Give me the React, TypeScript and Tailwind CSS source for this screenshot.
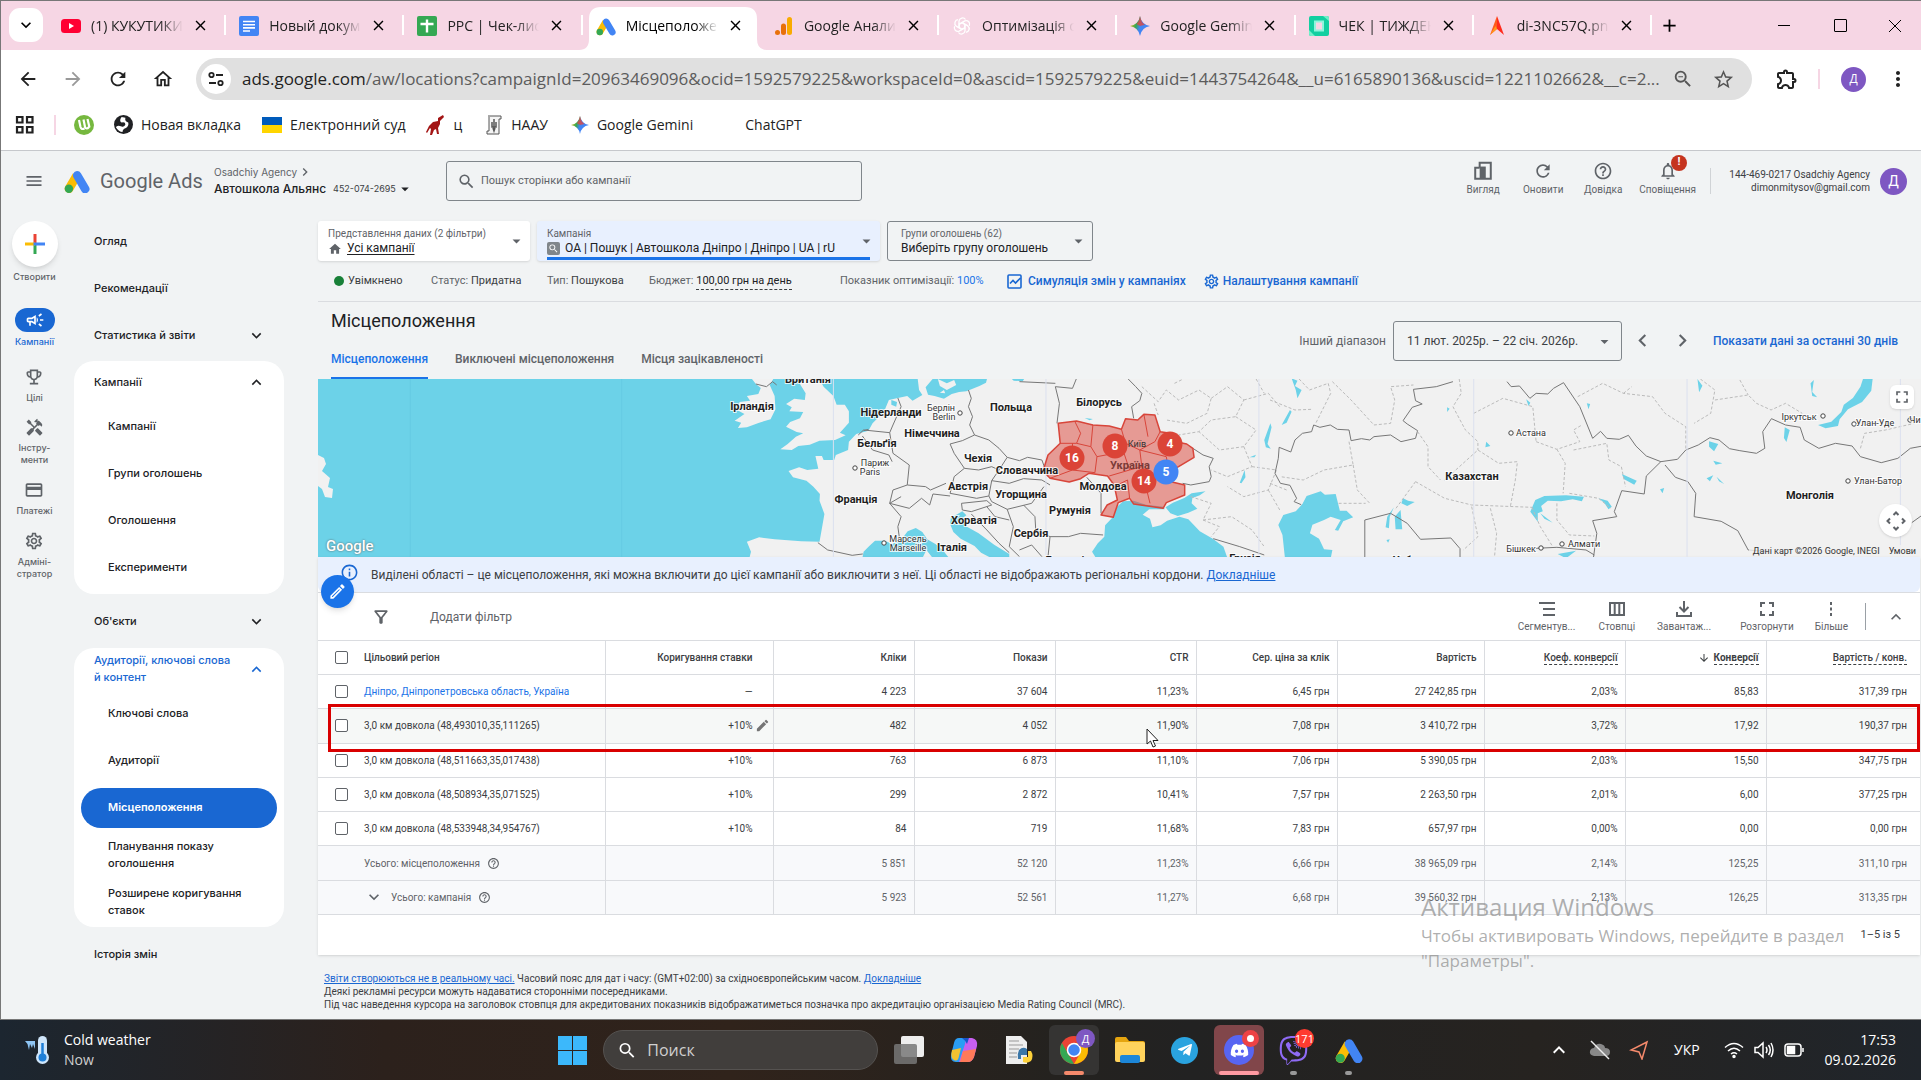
import React from 'react';
import {
  MdAdd, MdArrowBack, MdArrowDownward, MdArrowDropDown, MdArrowForward, MdChevronLeft, MdChevronRight,
  MdClose, MdEdit, MdFullscreen, MdHandyman, MdHelpOutline, MdHome, MdKeyboardArrowDown, MdKeyboardArrowUp,
  MdMenu, MdMoreVert, MdOutlineCampaign, MdOutlineCreditCard, MdOutlineEmojiEvents, MdOutlineExtension,
  MdOutlineFilterAlt, MdOutlineHome, MdOutlineInfo, MdOutlineModeEdit, MdOutlineNotifications,
  MdOutlineSettings, MdRefresh, MdSearch, MdStarBorder, MdZoomOut,
} from 'react-icons/md';
import { FaDiscord, FaTelegramPlane, FaViber } from 'react-icons/fa';

/* ---------- Logos ---------- */

const AdsLogo: React.FC<{ className?: string }> = ({ className }) => (
  <svg viewBox="0 0 26 24" className={className} aria-hidden="true">
    <path d="M9 4.2 L1.2 17.6 A4.4 4.4 0 0 0 8.8 22 L14.6 12 Z" fill="#fbbc04" />
    <path d="M9.3 4.6 A4.3 4.3 0 0 1 16.9 4.2 L25 18 A4.3 4.3 0 0 1 17.5 22.2 L9.5 8.6 Q8.5 6.6 9.3 4.6Z" fill="#4285f4" />
    <circle cx="4.9" cy="19.7" r="4.2" fill="#34a853" />
  </svg>
);

const GeminiLogo: React.FC<{ className?: string }> = ({ className }) => (
  <svg viewBox="0 0 20 20" className={className} aria-hidden="true">
    <defs>
      <linearGradient id="gem" x1="0" y1="0.2" x2="1" y2="0.5">
        <stop offset="0" stopColor="#fbbc04" />
        <stop offset="0.35" stopColor="#34a853" />
        <stop offset="0.55" stopColor="#4285f4" />
        <stop offset="1" stopColor="#4285f4" />
      </linearGradient>
    </defs>
    <path d="M10 0 Q11.5 8.5 20 10 Q11.5 11.500 10 20 Q8.500 11.500 0 10 Q8.500 8.500 10 0Z" fill="url(#gem)" />
    <path d="M10 0 Q11.300 7 15 8.800 L10 10 L6.500 8 Q9.200 5.500 10 0Z" fill="#ea4335" opacity="0.75" />
  </svg>
);

const YoutubeLogo = () => (
  <svg viewBox="0 0 20 20" className="size-5" aria-hidden="true">
    <rect x="0" y="3" width="20" height="14" rx="3.500" fill="#f03" />
    <path d="M8 7 L13 10 L8 13Z" fill="#fff" />
  </svg>
);

const DocsLogo = () => (
  <svg viewBox="0 0 20 20" className="size-5" aria-hidden="true">
    <rect width="20" height="20" rx="2" fill="#4285f4" />
    <path d="M4 5.500H16M4 8.700H16M4 11.900H16M4 15H11" stroke="#fff" strokeWidth="1.600" />
  </svg>
);

const SheetsLogo = () => (
  <svg viewBox="0 0 20 20" className="size-5" aria-hidden="true">
    <rect width="20" height="20" rx="2" fill="#34a853" />
    <path d="M10 3.500V16.500M3.500 8H16.500" stroke="#fff" strokeWidth="2.400" />
  </svg>
);

const AnalyticsLogo = () => (
  <svg viewBox="0 0 20 20" className="size-5" aria-hidden="true">
    <rect x="13" y="1" width="5" height="18" rx="2.500" fill="#f9ab00" />
    <rect x="7" y="7.500" width="5" height="11.500" rx="2.500" fill="#e8710a" />
    <circle cx="3.500" cy="16.500" r="2.500" fill="#e8710a" />
  </svg>
);

const GptLogo = () => (
  <svg viewBox="0 0 20 20" className="size-5" fill="none" stroke="#fff" strokeWidth="1.300" aria-hidden="true">
    {[0, 60, 120, 180, 240, 300].map((a) => (
      <path key={a} transform={`rotate(${a} 10 10)`} d="M7 10.500 V5 A3.600 3.600 0 0 1 13.500 3.500 M7 8.500 L11.500 6" />
    ))}
  </svg>
);

const CheckLogo = () => (
  <svg viewBox="0 0 20 20" className="size-5" aria-hidden="true">
    <rect width="20" height="20" rx="2" fill="#12cfa0" />
    <path d="M0 14 L6 20 H2 Q0 20 0 18Z M14 0 L20 5 V2 Q20 0 18 0Z" fill="#6ff0c8" />
    <rect x="5" y="4.500" width="10" height="11" fill="#8ff5dc" />
    <rect x="7" y="6.500" width="6" height="7" fill="#f6d6e4" />
  </svg>
);

const ArrowLogo = () => (
  <svg viewBox="0 0 20 20" className="size-5" aria-hidden="true">
    <path d="M10 0 L17 19 L10 13 Z" fill="#ff2a1c" />
    <path d="M10 0 L3 19 L10 13 Z" fill="#ff5a1c" />
    <path d="M3 19 L10 13 L8.500 10Z" fill="#ff9a1c" />
  </svg>
);

/* ---------- Browser chrome ---------- */

const tabs = [
  { title: '(1) КУКУТИКИ', icon: <YoutubeLogo /> },
  { title: 'Новый документ', icon: <DocsLogo /> },
  { title: 'PPC | Чек-лист', icon: <SheetsLogo /> },
  { title: 'Місцеположення', icon: <AdsLogo className="size-5" />, active: true },
  { title: 'Google Анализ', icon: <AnalyticsLogo /> },
  { title: 'Оптимізація с', icon: <GptLogo /> },
  { title: 'Google Gemini', icon: <GeminiLogo className="size-5" /> },
  { title: 'ЧЕК | ТИЖДЕН', icon: <CheckLogo /> },
  { title: 'di-3NC57Q.png', icon: <ArrowLogo /> },
];

const TabStrip = () => (
  <div className="flex h-[50px] items-stretch border-t border-[#777] bg-[#f6d6e4] pl-2">
    <button aria-label="Пошук вкладок" className="mt-[7px] flex h-[34px] w-[34px] shrink-0 items-center justify-center rounded-[11px] bg-white">
      <MdKeyboardArrowDown size={20} />
    </button>
    <div className="ml-[5px] flex w-[1604px] pt-[6px]">
      {tabs.map((tab) => (
        <div
          key={tab.title}
          className={`relative flex min-w-0 flex-1 items-center pb-[6px] pl-[13px] ${tab.active ? 'text-black' : 'text-[#222]'}`}
        >
          {tab.active ? (
            <svg className="absolute -left-[4px] top-0 h-full w-[188px]" viewBox="0 0 188 43" preserveAspectRatio="none" aria-hidden="true">
              <path d="M0 43 Q10 43 10 32 V12 Q10 0 22 0 H166 Q178 0 178 12 V32 Q178 43 188 43Z" fill="#fff" />
            </svg>
          ) : null}
          <span className="relative shrink-0">{tab.icon}</span>
          <span className="relative ml-[10px] w-[92px] overflow-hidden whitespace-nowrap text-sm [mask-image:linear-gradient(to_right,black_75%,transparent)]">
            {tab.title}
          </span>
          <button aria-label="Закрити" className="relative ml-[9px] text-black">
            <MdClose size={17} />
          </button>
          {!tab.active && <span className="absolute right-0 top-[8px] h-5 w-[2px] bg-white" />}
        </div>
      ))}
    </div>
    <button aria-label="Нова вкладка" className="ml-[7px] mb-[1px]"><MdAdd size={21} /></button>
    <div className="ml-auto flex">
      <button aria-label="Згорнути" className="flex w-[57px] items-center justify-center">
        <span className="h-px w-3 bg-black" />
      </button>
      <button aria-label="Розгорнути вікно" className="flex w-[57px] items-center justify-center">
        <span className="size-[13px] rounded-[1px] border border-black" />
      </button>
      <button aria-label="Закрити вікно" className="flex w-[52px] items-center justify-center">
        <svg viewBox="0 0 14 14" className="size-[14px]" stroke="#000" aria-hidden="true"><path d="M1 1L13 13M13 1L1 13" /></svg>
      </button>
    </div>
  </div>
);

const Toolbar = () => (
  <div className="flex h-[58px] items-center pl-[16px] pr-[11px]">
    <div className="flex gap-[23px] text-[#222]">
      <button aria-label="Назад"><MdArrowBack size={22} /></button>
      <button aria-label="Вперед" className="text-[#999]"><MdArrowForward size={22} /></button>
      <button aria-label="Оновити сторінку"><MdRefresh size={22} /></button>
      <button aria-label="Додому"><MdOutlineHome size={22} /></button>
    </div>
    <div className="ml-[22px] flex h-[42px] flex-1 items-center rounded-full bg-[#e0e0e0] pl-[5px] pr-[17px]">
      <button aria-label="Дані сайту" className="flex size-[30px] items-center justify-center rounded-full bg-white">
        <svg viewBox="0 0 18 18" className="size-[18px]" fill="none" stroke="#222" strokeWidth="1.800" aria-hidden="true">
          <circle cx="4.500" cy="5" r="2.200" /><path d="M9 5H16M2 13H9" /><circle cx="13.500" cy="13" r="2.200" />
        </svg>
      </button>
      <label htmlFor="url" className="ml-[11px] text-[17px] text-[#222]">ads.google.com</label>
      <input
        id="url"
        className="min-w-0 flex-1 bg-transparent text-[17px] text-[#5c5c5c] outline-none"
        defaultValue="/aw/locations?campaignId=20963469096&ocid=1592579225&workspaceId=0&ascid=1592579225&euid=1443754264&__u=6165890136&uscid=1221102662&__c=2..."
      />
      <button aria-label="Масштаб" className="text-[#555]"><MdZoomOut size={22} /></button>
      <button aria-label="Додати закладку" className="ml-[18px] text-[#555]"><MdStarBorder size={23} /></button>
    </div>
    <button aria-label="Розширення" className="ml-[23px] text-[#222]"><MdOutlineExtension size={24} /></button>
    <span className="ml-[19px] h-5 w-[2px] bg-[#f6d6e4]" />
    <button className="ml-[21px] flex size-[25px] items-center justify-center rounded-full bg-[#7e57c2] text-xs text-white">Д</button>
    <button aria-label="Меню" className="ml-[20px] text-[#222]"><MdMoreVert size={24} /></button>
  </div>
);

const Bookmarks = () => (
  <nav className="flex h-[42px] items-center whitespace-nowrap pb-[9px] pl-[14px] text-sm text-[#222]">
    <button aria-label="Усі програми">
      <svg viewBox="0 0 20 20" className="size-5" fill="none" stroke="#222" strokeWidth="2.200" aria-hidden="true">
        <path d="M2 2H7.500V7.500H2ZM12 2H17.500V7.500H12ZM2 12H7.500V17.500H2ZM12 12H17.500V17.500H12Z" />
      </svg>
    </button>
    <span className="ml-[19px] h-5 w-[2px] bg-[#f6d6e4]" />
    <a href="#" aria-label="uTorrent" className="ml-[18px]">
      <svg viewBox="0 0 20 20" className="size-5" aria-hidden="true">
        <circle cx="10" cy="10" r="10" fill="#76b83f" />
        <path d="M5 5 L6.500 12 Q7.500 15 10.500 13.500 M9.500 4.500 L11 12 Q12.500 15 15 12 M13.500 4 L15.500 12.500" stroke="#fff" strokeWidth="2.200" fill="none" />
      </svg>
    </a>
    <a href="#" className="ml-[20px] flex items-center gap-2">
      <svg viewBox="0 0 20 20" className="size-[19px]" aria-hidden="true">
        <circle cx="10" cy="10" r="10" fill="#202124" />
        <path d="M8 2 Q5 6 8 8 Q12 7 12 10 Q11 13 8 12 Q3 10 2 13 Q5 18 9 18 Q9 15 12 14 Q16 12 15 8 Q11 7 12 3Z" fill="#fff" />
      </svg>
      Новая вкладка
    </a>
    <a href="#" className="ml-[21px] flex items-center gap-2">
      <svg viewBox="0 0 20 16" className="h-4 w-5" aria-hidden="true">
        <rect width="20" height="8" fill="#005bbb" /><rect y="8" width="20" height="8" fill="#ffd500" />
      </svg>
      Електронний суд
    </a>
    <a href="#" className="ml-[21px] flex items-center gap-[9px]">
      <svg viewBox="0 0 18 20" className="h-5 w-[18px]" fill="#a31515" aria-hidden="true">
        <path d="M17 0 L12 3 L12 6 L7 7 L3 11 L0 17 L1 18 L4 13 L5 14 L4 20 L6 20 L8 15 L10 14 L11 19 L13 19 L12 13 L14 9 L14 6 L18 2Z" />
      </svg>
      ц
    </a>
    <a href="#" className="ml-[23px] flex items-center gap-2">
      <svg viewBox="0 0 18 20" className="h-5 w-[18px]" fill="none" stroke="#555" aria-hidden="true">
        <path d="M3 1H16V4H14V19H2V16H4V2" fill="#f4f4f4" /><path d="M9 4V15M7 7V12H11V7M8 13L9 16L10 13" strokeWidth="1.500" />
      </svg>
      НААУ
    </a>
    <a href="#" className="ml-[23px] flex items-center gap-2"><GeminiLogo className="size-[18px]" />Google Gemini</a>
    <a href="#" className="ml-[52px]">ChatGPT</a>
  </nav>
);

/* ---------- Google Ads header ---------- */

const headerActions = [
  {
    label: 'Вигляд',
    icon: (
      <svg viewBox="0 0 18 18" className="size-5" aria-hidden="true">
        <path d="M6 6V1.500H16V16H2V6H6" fill="none" stroke="#5f6368" strokeWidth="1.800" /><rect x="6" y="5" width="5.500" height="11" fill="#5f6368" />
      </svg>
    ),
  },
  { label: 'Оновити', icon: <MdRefresh size={20} /> },
  { label: 'Довідка', icon: <MdHelpOutline size={20} /> },
  { label: 'Сповіщення', icon: <MdOutlineNotifications size={20} />, badge: true },
];

const AdsHeader = () => (
  <header className="flex h-[61px] items-center border-t border-[#c6c8cc] pl-[23px] pr-[14px]">
    <button aria-label="Головне меню" className="text-[#5f6368]"><MdMenu size={20} /></button>
    <AdsLogo className="ml-[20px] h-[24px] w-[26px]" />
    <span className="ml-[10px] w-[114px] text-[20px] text-[#5f6368]">Google Ads</span>
    <div className="w-[232px] font-[Inter,sans-serif]">
      <div className="flex items-center text-[10px] leading-[14px] text-[#5f6368]">
        Osadchiy Agency <MdChevronRight size={16} />
      </div>
      <button className="flex items-center whitespace-nowrap leading-[14px] text-[#202124]">
        <span className="text-xs font-medium">Автошкола Альянс</span>
        <span className="ml-[7px] text-[9px] text-[#3c4043]">452-074-2695</span>
        <MdArrowDropDown size={18} />
      </button>
    </div>
    <label className="flex h-10 w-[416px] items-center rounded-[3px] border border-[#80868b] pl-[10px] text-[#5f6368]">
      <MdSearch size={19} />
      <input aria-label="Пошук" placeholder="Пошук сторінки або кампанії" className="ml-[5px] min-w-0 flex-1 bg-transparent text-[11px] outline-none placeholder:text-[#5f6368]" />
    </label>
    <div className="ml-auto flex items-center text-[#5f6368]">
      {headerActions.map((action) => (
        <button key={action.label} className="relative flex min-w-[60px] flex-col items-center gap-[3px] px-[6px] pb-[6px]">
          {action.icon}
          <span className="text-[10px] leading-3">{action.label}</span>
          {action.badge && (
            <span className="absolute right-[15px] -top-[6px] flex size-4 items-center justify-center rounded-full bg-[#c5341f] text-[11px] font-bold text-white">!</span>
          )}
        </button>
      ))}
      <span className="ml-[8px] h-[26px] w-px bg-[#d0d3d6]" />
      <div className="ml-[10px] w-[149px] text-right text-[10px] leading-[13px] text-[#3c4043]">
        144-469-0217 Osadchiy Agency<br />dimonmitysov@gmail.com
      </div>
      <button className="ml-[10px] flex size-[27px] items-center justify-center rounded-full bg-[#7e57c2] text-sm text-white">Д</button>
    </div>
  </header>
);

/* ---------- Navigation ---------- */

const RailItem: React.FC<{ icon: React.ReactNode; lines: string[] }> = ({ icon, lines }) => (
  <a href="#" className="flex flex-col items-center gap-[5px] text-center text-[#5f6368]">
    {icon}
    <span>{lines.map((line) => <span key={line} className="block">{line}</span>)}</span>
  </a>
);

const Rail = () => (
  <nav className="flex w-[67px] shrink-0 flex-col items-center pt-[10px] font-[Inter,sans-serif] text-[9px] font-medium leading-3">
    <button aria-label="Створити" className="flex size-[46px] items-center justify-center rounded-full bg-white shadow-md">
      <svg viewBox="0 0 20 20" className="size-5" strokeWidth="3" aria-hidden="true">
        <path d="M10 0V10" stroke="#ea4335" /><path d="M10 10V20" stroke="#34a853" />
        <path d="M0 10H10" stroke="#fbbc04" /><path d="M8.500 10H20" stroke="#4285f4" />
      </svg>
    </button>
    <span className="mt-[4px] text-[#5f6368]">Створити</span>
    <a href="#" className="mt-[25px] flex flex-col items-center gap-[4px] text-[#1967d2]">
      <span className="flex h-6 w-10 items-center justify-center rounded-full bg-[#1967d2] text-white"><MdOutlineCampaign size={20} /></span>
      Кампанії
    </a>
    <div className="mt-[19px] flex flex-col gap-[14px]">
      <RailItem icon={<MdOutlineEmojiEvents size={20} />} lines={['Цілі']} />
      <RailItem icon={<MdHandyman size={19} />} lines={['Інстру-', 'менти']} />
      <RailItem icon={<MdOutlineCreditCard size={20} />} lines={['Платежі']} />
      <RailItem icon={<MdOutlineSettings size={20} />} lines={['Адміні-', 'стратор']} />
    </div>
  </nav>
);

const navRow = 'flex h-[47px] items-center';

const SideNav = () => (
  <nav className="w-[210px] shrink-0 pt-[7px] ml-[6px] mr-[34px] font-[Inter,sans-serif] text-[11px] font-medium leading-[17px] text-[#202124]">
    <a href="#" className={`${navRow} pl-5`}>Огляд</a>
    <a href="#" className={`${navRow} pl-5`}>Рекомендації</a>
    <button className={`${navRow} w-full justify-between pl-5 pr-[18px]`}>Статистика й звіти <MdKeyboardArrowDown size={19} /></button>
    <div className="mt-[2px] rounded-[20px] bg-white pb-[3px]">
      <button className="flex h-[42px] w-full items-center justify-between pl-5 pr-[18px]">Кампанії <MdKeyboardArrowUp size={19} /></button>
      {['Кампанії', 'Групи оголошень', 'Оголошення', 'Експерименти'].map((item) => (
        <a href="#" key={item} className={`${navRow} pl-[34px]`}>{item}</a>
      ))}
    </div>
    <button className="flex h-[54px] w-full items-center justify-between pl-5 pr-[18px]">Об'єкти <MdKeyboardArrowDown size={19} /></button>
    <div className="rounded-[20px] bg-white pb-[2px]">
      <button className="flex h-[42px] w-full items-center justify-between pl-5 pr-[18px] text-left text-[#1967d2]">
        <span>Аудиторії, ключові слова<br />й контент</span>
        <MdKeyboardArrowUp size={19} />
      </button>
      <a href="#" className={`${navRow} pl-[34px]`}>Ключові слова</a>
      <a href="#" className={`${navRow} pl-[34px]`}>Аудиторії</a>
      <div className="flex h-[47px] items-center px-[7px]">
        <a href="#" className="flex h-10 flex-1 items-center rounded-full bg-[#1967d2] pl-[27px] font-semibold text-white">Місцеположення</a>
      </div>
      <a href="#" className={`${navRow} pl-[34px]`}>Планування показу<br />оголошення</a>
      <a href="#" className={`${navRow} pl-[34px]`}>Розширене коригування<br />ставок</a>
    </div>
    <a href="#" className="flex h-[54px] items-center pl-5">Історія змін</a>
  </nav>
);

/* ---------- Scope selectors and status ---------- */

const Caret = () => (
  <MdArrowDropDown size={19} className="pointer-events-none absolute right-[4px] top-1/2 -translate-y-1/2 text-[#5f6368]" />
);

const ScopeBar = () => (
  <div className="flex gap-[7px] pt-[10px] text-xs text-[#202124]">
    <div className="relative h-10 w-[212px] rounded-[3px] bg-white pl-[10px] pt-[5px] shadow">
      <label htmlFor="view" className="block text-[10px] leading-[15px] text-[#5f6368]">Представлення даних (2 фільтри)</label>
      <div className="flex items-center">
        <MdHome size={14} className="text-[#5f6368]" />
        <select id="view" className="ml-[5px] appearance-none leading-[15px] underline underline-offset-2"><option>Усі кампанії</option></select>
      </div>
      <Caret />
    </div>
    <div className="relative h-10 w-[343px] rounded-[3px] bg-[#e8f0fe] px-[10px] pt-[5px] shadow">
      <label htmlFor="campaign" className="block text-[10px] leading-[15px] text-[#5f6368]">Кампанія</label>
      <div className="flex h-[19px] items-start border-b-[3px] border-[#1a73e8]">
        <span className="mt-[1px] flex size-[13px] items-center justify-center rounded-[2px] bg-[#80868b] text-white"><MdSearch size={11} /></span>
        <select id="campaign" className="ml-[5px] appearance-none leading-[15px]"><option>OA | Пошук | Автошкола Дніпро | Дніпро | UA | rU</option></select>
      </div>
      <Caret />
    </div>
    <div className="relative h-10 w-[206px] rounded-[3px] border border-[#80868b] pl-[13px] pt-[5px]">
      <label htmlFor="group" className="block text-[10px] leading-[14px] text-[#5f6368]">Групи оголошень (62)</label>
      <select id="group" className="block appearance-none leading-[15px]"><option>Виберіть групу оголошень</option></select>
      <Caret />
    </div>
  </div>
);

const StatusRow = () => (
  <div className="flex h-[41px] items-center whitespace-nowrap border-b border-[#dadce0] pl-4 text-[11px] text-[#5f6368]">
    <span className="size-[10px] rounded-full bg-[#188038]" />
    <span className="ml-[4px] w-[83px] text-[#3c4043]">Увімкнено</span>
    <span className="w-[116px]">Статус: <span className="text-[#3c4043]">Придатна</span></span>
    <span className="w-[102px]">Тип: <span className="text-[#3c4043]">Пошукова</span></span>
    <span className="w-[191px]">Бюджет: <span className="border-b border-dashed border-[#3c4043] pb-[2px] text-[#202124]">100,00 грн на день</span></span>
    <span className="w-[167px]">Показник оптимізації: <a href="#" className="text-[#1a73e8]">100%</a></span>
    <a href="#" className="flex items-center gap-[6px] text-xs font-medium text-[#1967d2]">
      <svg viewBox="0 0 15 15" className="size-[15px]" fill="none" stroke="#1967d2" strokeWidth="1.600" aria-hidden="true">
        <rect x="1" y="1" width="13" height="13" rx="1" /><path d="M3 9.500L6 6.500L8.500 9L13.500 4" />
      </svg>
      Симуляція змін у кампаніях
    </a>
    <a href="#" className="ml-[17px] flex items-center gap-[3px] text-xs font-medium text-[#1967d2]">
      <MdOutlineSettings size={17} />Налаштування кампанії
    </a>
  </div>
);

const PageTitle = () => (
  <div className="flex h-[77px] items-stretch justify-between">
    <div className="flex flex-col justify-between pl-[13px]">
      <h1 className="pt-[6px] text-[18px] leading-[26px] text-[#202124]">Місцеположення</h1>
      <div className="flex gap-[27px] text-xs font-medium text-[#5f6368]">
        <a href="#" className="h-[29px] border-b-2 border-[#1a73e8] leading-[18px] text-[#1a73e8]">Місцеположення</a>
        <a href="#" className="h-[29px] leading-[18px]">Виключені місцеположення</a>
        <a href="#" className="h-[29px] leading-[18px]">Місця зацікавленості</a>
      </div>
    </div>
    <div className="flex items-center pr-[23px] text-xs text-[#5f6368]">
      <label htmlFor="range">Інший діапазон</label>
      <div className="relative ml-[7px] h-10 w-[229px] rounded-[3px] border border-[#80868b]">
        <select id="range" className="h-full w-full appearance-none pl-[13px] text-[#3c4043]"><option>11 лют. 2025р. – 22 січ. 2026р.</option></select>
        <MdArrowDropDown size={19} className="pointer-events-none absolute right-[7px] top-[10px]" />
      </div>
      <button aria-label="Попередній період" className="ml-[8px]"><MdChevronLeft size={25} /></button>
      <button aria-label="Наступний період" className="ml-[15px]"><MdChevronRight size={25} /></button>
      <a href="#" className="ml-[18px] font-medium text-[#1967d2]">Показати дані за останні 30 днів</a>
    </div>
  </div>
);

/* ---------- Map ---------- */

const countries: [number, number, string][] = [
  [490, 4, 'Британія'], [434, 31, 'Ірландія'], [573, 37, 'Нідерланди'], [693, 32, 'Польща'], [781, 27, 'Білорусь'],
  [614, 58, 'Німеччина'], [559, 68, 'Бельґія'], [660, 83, 'Чехія'], [709, 95, 'Словаччина'], [650, 111, 'Австрія'],
  [703, 119, 'Угорщина'], [538, 124, 'Франція'], [752, 135, 'Румунія'], [656, 145, 'Хорватія'], [713, 158, 'Сербія'],
  [634, 172, 'Італія'], [785, 111, 'Молдова'], [812, 90, 'Україна'], [1154, 101, 'Казахстан'], [1492, 120, 'Монголія'],
  [750, 185, 'Болгарія'], [927, 183, 'Грузія'], [1105, 185, 'Узбекистан'],
];

const cities: [number, number, string][] = [
  [623, 32, 'Берлін'], [626, 41, 'Berlin'], [557, 87, 'Париж'], [552, 96, 'Paris'], [590, 163, 'Марсель'], [590, 172, 'Marseille'],
  [819, 68, 'Київ'], [1213, 57, 'Астана'], [1266, 168, 'Алмати'], [1203, 173, 'Бішкек'], [1481, 41, 'Іркутськ'],
  [1557, 47, 'Улан-Уде'], [1560, 105, 'Улан-Батор'], [1597, 44, 'Чи'],
];

const cityDots: [number, number][] = [
  [642, 34], [537, 89], [566, 164], [1193, 54], [1244, 165], [1223, 169], [1505, 37], [1536, 45], [1530, 102], [1592, 41],
];

const clusters: [number, number, string, string][] = [
  [754, 79, '16', '#db4437'], [797, 67, '8', '#db4437'], [852, 65, '4', '#db4437'],
  [826, 102, '14', '#db4437'], [848, 93, '5', '#4285f4'],
];

const LocationMap = () => (
  <div className="relative h-[178px] overflow-hidden bg-[#6cd2e8]">
    <svg viewBox="0 0 1603 178" preserveAspectRatio="xMidYMid slice" className="h-full w-full font-[Roboto,sans-serif]" role="img" aria-label="Мапа місцеположень">
      <path d="M0 76 L6 79 L8 85 L4 92 L12 99 L10 108 L15 110 L14 119 L7 118 L4 110 L0 107Z" fill="#f1f1f1" />
      {/* Europe */}
      <g transform="translate(322 -9) scale(0.408 0.3333)" strokeLinejoin="round">
        <path fill="#f1f1f1" d="M680 20 L684 60 L692 75 L668 92 L655 78 L632 84 L610 90 L598 125 L570 160 L560 182 L530 192 L512 215 L510 240 L480 255 L476 270 L450 270 L446 258 L430 258 L437 296 L410 300 L390 292 L364 303 L375 322 L408 332 L425 350 L441 372 L440 392 L452 432 L446 474 L440 515 L395 514 L330 508 L292 502 L262 515 L272 545 L268 565 L3200 565 L3200 20 L852 20 L848 38 L832 48 L800 64 L782 66 L764 72 L745 86 L722 78 L706 74 L700 52 L722 20Z" />
        <path fill="#f1f1f1" d="M730 27 L752 40 L770 30 L775 45 L752 60 L735 48Z M735 68 L745 60 L748 70Z" />
        <path fill="#f1f1f1" d="M382 20 L395 48 L406 70 L404 90 L378 86 L358 102 L372 112 L366 124 L400 126 L392 145 L368 156 L358 170 L384 186 L400 190 L382 200 L362 222 L344 238 L372 240 L388 228 L416 224 L440 212 L478 210 L504 196 L490 188 L512 158 L512 124 L502 104 L482 104 L474 78 L450 50 L436 20Z" />
        <path fill="#f1f1f1" d="M270 20 L330 20 L318 45 L330 78 L332 118 L320 148 L292 158 L262 172 L240 174 L248 158 L232 152 L256 132 L238 120 L244 96 L270 92 L262 78 L290 72 L296 54 L284 42Z" />
        <g fill="#6cd2e8">
          <path d="M545 565 L548 545 L562 528 L576 512 L600 512 L618 522 L640 510 L656 484 L676 474 L692 486 L704 508 L724 522 L742 540 L758 565 L718 565 L702 540 L692 565Z" />
          <path d="M762 444 L790 424 L800 436 L788 446 L798 468 L830 490 L868 524 L905 552 L905 565 L862 565 L836 548 L820 528 L786 506 L768 486 L760 462Z" />
          <path d="M1160 440 L1168 412 L1184 394 L1210 392 L1240 404 L1284 410 L1286 418 L1248 418 L1232 434 L1250 446 L1256 472 L1276 466 L1292 452 L1322 440 L1344 448 L1372 484 L1404 506 L1430 530 L1440 565 L1118 565 L1108 545 L1122 520 L1138 500 L1140 466Z" />
          <path d="M1288 412 L1306 398 L1334 384 L1352 370 L1386 364 L1372 376 L1354 384 L1352 400 L1366 416 L1344 428 L1318 438 L1300 430Z" />
          <path d="M905 20 L945 20 L938 34 L916 32Z M616 90 L630 96 L628 110 L616 104Z" />
          <path d="M1470 338 L1482 300 L1484 322 L1474 340Z M1530 210 L1545 160 L1548 172 L1538 222 L1546 236 L1534 232Z M1494 262 L1510 254 L1506 262Z M1090 144 l20 3 l-8 4Z" />
        </g>
        <g fill="none" stroke="#777" strokeWidth="1">
          <path vectorEffect="non-scaling-stroke" d="M632 84 L640 110 L620 165 L612 188 L548 180 L535 195 M612 188 L620 250 L660 285 L655 345 L620 360 L612 400 L660 415 L690 385 L710 405 L718 372 L760 378 M545 198 L570 240 L610 255 L618 275 M548 182 L560 178 M655 345 L700 350 L712 360 L750 340 M805 60 L812 85 L805 110 L815 140 L808 165 L820 195 L790 212 L760 222 L770 250 L795 295 L770 320 L760 370 L825 385 L855 378 L862 332 L880 300 L862 290 L830 300 L795 295 M820 195 L855 210 L880 235 L900 262 L880 300 M900 262 L930 272 L950 262 L985 270 L1000 320 M862 332 L905 340 L940 326 L985 330 L1005 345 M855 378 L862 395 L900 418 L960 400 L990 350 M788 400 L850 392 L862 405 L812 425 L790 420Z M850 410 L870 440 L905 450 M812 432 L850 480 L880 520 L905 548 M900 418 L915 470 L905 530 L930 560 M940 405 L968 440 L970 480 L1005 500 L1050 500 L1080 490 L1135 495 M1005 500 L1000 560 M930 540 L960 525 L985 560 M1095 322 L1130 370 L1130 430 M1018 50 L1028 100 L1022 160 M1018 50 L1060 55 L1070 25 M930 35 L1018 40 M1195 25 L1215 50 L1230 70 L1225 92 L1205 110 L1210 145 M1355 235 L1380 255 L1405 265 L1395 290 L1400 320 L1395 335 L1350 345 L1330 340 M436 518 L460 540 L520 556 L546 552 M640 380 L612 400 L640 440 L632 470 L636 505 M284 42 L310 50 L325 35 L335 45 M1405 506 L1470 530 L1530 555" />
          <path vectorEffect="non-scaling-stroke" stroke="#bbb" strokeDasharray="3 2" d="M1230 50 L1270 95 L1290 60 L1320 90 L1370 60 L1400 85 L1390 130 L1340 160 L1290 150 M1260 100 L1270 135 M1400 85 L1440 50 L1480 90 L1460 140 L1400 150 L1370 185 L1320 195 M1480 90 L1540 70 L1568 110 M1460 140 L1510 180 L1480 230 L1420 240 L1370 185 M1480 230 L1500 290 L1440 320 L1400 300 M1500 290 L1560 300 L1540 360 L1480 380 L1440 350 M1350 380 L1400 400 L1380 450 L1420 470 L1400 500 M1380 450 L1450 440 L1500 480 L1530 530 M1540 360 L1568 420 M1310 40 L1330 28 M1510 27 L1530 70" />
          <path vectorEffect="non-scaling-stroke" stroke="#5fc6e0" strokeOpacity="0.5" d="M-563 20V560 M-45 20V560" />
          <path vectorEffect="non-scaling-stroke" stroke="#dbe0ef" d="M474 20V560 M995 20V560 M1517 20V560" />
        </g>
        <path fill="#db4437" fillOpacity="0.5" stroke="#d8453a" strokeWidth="1.500" vectorEffect="non-scaling-stroke" d="M1025 160 L1070 153 L1110 165 L1150 168 L1180 178 L1190 146 L1220 150 L1235 133 L1262 135 L1275 185 L1300 190 L1325 218 L1340 222 L1355 235 L1358 262 L1320 290 L1296 306 L1304 336 L1335 345 L1335 375 L1290 398 L1282 415 L1210 402 L1200 385 L1172 398 L1160 442 L1130 435 L1145 405 L1170 390 L1162 345 L1146 318 L1100 310 L1080 326 L1052 336 L1005 325 L988 302 L1000 255 L1030 220Z" />
        <path fill="none" stroke="#d8453a" strokeWidth="1" vectorEffect="non-scaling-stroke" d="M1066 155 L1080 190 L1070 220 L1030 220 M1110 165 L1105 230 L1120 260 L1115 308 M1070 220 L1105 230 M1180 178 L1190 220 L1225 240 L1262 215 L1275 185 M1120 260 L1185 245 L1190 220 M1235 133 L1245 200 M1185 245 L1200 300 L1150 318 M1200 300 L1230 290 L1225 240 L1290 260 L1296 306 M1170 345 L1195 330 L1200 385 M1230 290 L1240 320 L1300 330 M1060 220 L1060 300 L1005 325 M1060 300 L1115 308 M1240 350 L1250 400" />
      </g>
      {/* Asia */}
      <g transform="translate(952 -9) scale(0.4158 0.3333)" strokeLinejoin="round">
        <g fill="#6cd2e8">
          <path d="M36 565 L30 495 L20 465 L32 435 L62 424 L78 402 L88 378 L122 364 L132 374 L158 372 L168 422 L184 422 L200 442 L176 454 L164 482 L156 480 L170 450 L146 440 L130 450 L102 464 L96 490 L118 506 L130 538 L150 540 L146 565Z" />
          <path d="M282 440 L298 412 L288 440 L286 475 L278 472Z M300 440 L314 420 L318 478 L302 478Z M320 385 L332 392 L348 396 L330 408 L316 400Z M280 510 L288 508 L284 518Z" />
          <path d="M626 425 L638 390 L660 378 L712 376 L755 380 L750 394 L728 388 L700 394 L668 392 L652 408 L656 424 L644 430 L644 455Z M790 385 L812 392 L822 410 L814 418 L804 398Z M650 430 L680 458 L660 446Z M692 552 L736 542 L712 565Z" />
          <path d="M1428 20 L1450 20 L1446 62 L1424 96 L1390 118 L1370 148 L1366 168 L1336 175 L1318 165 L1350 155 L1374 126 L1380 104 L1402 84 L1420 50Z" />
          <path d="M52 25 L66 32 L60 48 L76 60 L66 85 L62 60Z M28 165 L48 120 L52 125 L40 158Z M846 312 L882 332 L876 344 L852 328Z M1056 214 L1078 222 L1068 244 L1056 230Z M1238 172 L1250 180 L1242 216 L1236 204Z M1066 272 L1088 280 L1072 284Z M1050 325 L1066 316 L1058 334Z M1074 320 L1092 342 L1080 334Z M520 215 L530 228 L518 232Z M616 88 L626 98 L622 108Z M762 100 l8 2 l-4 16Z M1028 27 l12 20 l-8 20Z M1300 40 L1308 30 L1304 66 L1316 82 L1304 78Z M938 358 l10 -4 l-4 16Z M426 112 l6 4 l-6 10Z" />
        </g>
        <g fill="none">
          <path stroke="#777" vectorEffect="non-scaling-stroke" d="M440 35 L400 50 L345 58 L350 92 L366 102 L342 112 L320 152 L330 162 L355 182 L350 205 L315 215 L290 195 L250 200 L240 210 L220 206 L195 212 L190 180 L162 178 L145 165 L120 172 L105 165 L100 185 L78 190 L60 210 L50 246 L22 232 L20 265 L12 310 L25 340 L48 346 L64 385 L58 395 L75 404 M570 35 L580 50 L600 48 L625 85 L640 70 L668 72 L682 55 L706 38 L745 110 L776 205 L795 184 L810 205 L840 208 L862 196 L880 228 L905 258 L940 275 L980 268 L1000 240 L1030 225 L1058 203 L1080 210 L1105 236 L1130 242 L1170 250 L1190 235 L1185 185 L1206 146 L1240 165 L1275 172 L1285 210 L1320 235 L1360 220 L1400 228 L1420 260 L1470 278 L1510 265 L1540 235 L1570 228 M940 275 L905 318 L900 372 L846 362 L828 425 L834 440 L776 452 L786 490 L778 562 M950 285 L975 322 L1005 335 L1024 370 L1020 440 L1085 454 L1125 482 L1150 540 L1200 545 M228 562 L228 450 L290 430 L330 460 L362 508 L435 504 L457 536 L457 562 M640 535 L690 532 L760 540 L780 555 M1530 470 L1568 436" />
          <path stroke="#bbb" strokeDasharray="3 2" vectorEffect="non-scaling-stroke" d="M70 27 L95 60 L140 40 L146 70 L110 160 M150 35 L195 90 L250 165 L290 160 L300 90 L290 50 L345 45 M0 90 L60 120 L100 118 M455 27 L460 70 L440 110 L470 180 L500 215 L500 240 M490 130 L560 85 L632 110 L640 215 M355 185 L380 230 L380 290 L410 330 M190 215 L200 285 L130 300 L80 330 L25 320 M200 285 L210 360 L240 400 M350 335 L300 420 M350 335 L420 385 L485 405 L630 412 M420 330 L500 240 L550 280 L595 275 L590 330 L578 410 M640 215 L690 238 L745 215 L730 180 L750 165 M690 238 L710 280 L705 370 M730 240 L810 220 L815 270 L845 290 L855 350 M740 80 L800 40 L850 70 L920 80 L950 130 L1000 170 L1000 240 M850 70 L870 50 M1035 27 L1070 60 L1060 130 L1020 160 M1070 90 L1150 75 L1170 100 L1205 120 L1240 100 L1280 130 M530 415 L545 490 L540 560 M485 410 L500 500 L465 540 M690 400 L690 450 L720 495 L780 498 M720 370 L790 385 L820 415 M1420 235 L1430 190 L1480 180 L1550 160 M1130 30 L1150 75 M630 412 L650 470 L680 530 M0 340 L40 360 M165 400 L230 400" />
          <path stroke="#dbe0ef" vectorEffect="non-scaling-stroke" d="M490 20V560 M1003 20V560 M1516 20V560" />
        </g>
      </g>
      <g fill="#fff" stroke="#444">
        {cityDots.map(([x, y]) => <circle key={`${x}-${y}`} cx={x} cy={y} r="2.200" />)}
      </g>
      <g textAnchor="middle" stroke="#fff" strokeWidth="2" paintOrder="stroke">
        {cities.map(([x, y, name]) => <text key={name} x={x} y={y} fontSize="9" fill="#333" strokeOpacity={name === 'Київ' ? 0 : 0.8}>{name}</text>)}
        {countries.map(([x, y, name]) => (
          <text key={name} x={x} y={y} fontSize="11" fontWeight="700" fill={name === 'Україна' ? '#7a3a38' : '#1f1f1f'} strokeOpacity={name === 'Україна' ? 0 : 0.8}>{name}</text>
        ))}
      </g>
      {clusters.map(([x, y, count, color]) => (
        <g key={count}>
          <circle cx={x} cy={y} r="12.500" fill={color} />
          <text x={x} y={y + 4} fontSize="12" fontWeight="700" fill="#fff" textAnchor="middle">{count}</text>
        </g>
      ))}
    </svg>
    <span className="absolute bottom-0 left-[8px] text-[15px] font-medium text-white [text-shadow:0_0_2px_#555]">Google</span>
    <button aria-label="На весь екран" className="absolute right-[7px] top-[6px] flex size-6 items-center justify-center rounded-md bg-white text-[#5f6368] shadow">
      <MdFullscreen size={20} />
    </button>
    <button aria-label="Керування камерою" className="absolute bottom-[20px] right-[9px] flex size-[33px] items-center justify-center rounded-full bg-white shadow">
      <svg viewBox="0 0 20 20" className="size-5" fill="none" stroke="#5f6368" strokeWidth="2" aria-hidden="true">
        <path d="M7.500 4L10 1.500L12.500 4M7.500 16L10 18.500L12.500 16M4 7.500L1.500 10L4 12.500M16 7.500L18.500 10L16 12.500" />
      </svg>
    </button>
    <div className="absolute bottom-0 right-0 flex gap-[9px] whitespace-nowrap bg-[#f1f1f1]/80 pl-1 pr-[5px] text-[9px] leading-[12px] text-[#333]">
      <span>Дані карт ©2026 Google, INEGI</span><a href="#">Умови</a>
    </div>
  </div>
);

/* ---------- Table ---------- */

const tableActions = [
  { label: 'Сегментув...', icon: <path d="M1 3H17M5 9H17M5 15H17" />, gap: 'ml-0' },
  { label: 'Стовпці', icon: <path d="M2 3H16V15H2ZM6.700 3V15M11.300 3V15" />, gap: 'ml-[23px]' },
  { label: 'Завантаж...', icon: <path d="M9 1V11M4.500 7L9 11.500L13.500 7M2 12V16H16V12" />, gap: 'ml-[22px]' },
  { label: 'Розгорнути', icon: <path d="M3 7V3H7M11 3H15V7M15 11V15H11M7 15H3V11" />, gap: 'ml-[29px]' },
  { label: 'Більше', icon: <path d="M9 2V5M9 7.500V10.500M9 13V16" />, gap: 'ml-[21px]' },
];

const TableToolbar = () => (
  <div className="flex h-[48px] items-center border-t border-[#dadce0] pl-[53px] pr-[14px] text-[#5f6368]">
    <button aria-label="Фільтр"><MdOutlineFilterAlt size={20} /></button>
    <button className="ml-[39px] text-xs">Додати фільтр</button>
    <div className="ml-auto flex items-center">
      {tableActions.map((action) => (
        <button key={action.label} className={`flex flex-col items-center gap-[3px] text-[10px] leading-3 ${action.gap}`}>
          <svg viewBox="0 0 18 18" className="size-[18px]" fill="none" stroke="#5f6368" strokeWidth="2" aria-hidden="true">{action.icon}</svg>
          {action.label}
        </button>
      ))}
      <span className="ml-[17px] h-[27px] w-px bg-[#9aa0a6]" />
      <button aria-label="Згорнути" className="ml-[20px]"><MdKeyboardArrowUp size={20} /></button>
    </div>
  </div>
);

const rows = [
  { name: 'Дніпро, Дніпропетровська область, Україна', link: true, cells: ['—', '4 223', '37 604', '11,23%', '6,45 грн', '27 242,85 грн', '2,03%', '85,83', '317,39 грн'] },
  { name: '3,0 км довкола (48,493010,35,111265)', hover: true, cells: ['+10%', '482', '4 052', '11,90%', '7,08 грн', '3 410,72 грн', '3,72%', '17,92', '190,37 грн'] },
  { name: '3,0 км довкола (48,511663,35,017438)', cells: ['+10%', '763', '6 873', '11,10%', '7,06 грн', '5 390,05 грн', '2,03%', '15,50', '347,75 грн'] },
  { name: '3,0 км довкола (48,508934,35,071525)', cells: ['+10%', '299', '2 872', '10,41%', '7,57 грн', '2 263,50 грн', '2,01%', '6,00', '377,25 грн'] },
  { name: '3,0 км довкола (48,533948,34,954767)', cells: ['+10%', '84', '719', '11,68%', '7,83 грн', '657,97 грн', '0,00%', '0,00', '0,00 грн'] },
];

const totals = [
  { name: 'Усього: місцеположення', cells: ['', '5 851', '52 120', '11,23%', '6,66 грн', '38 965,09 грн', '2,14%', '125,25', '311,10 грн'] },
  { name: 'Усього: кампанія', expandable: true, cells: ['', '5 923', '52 561', '11,27%', '6,68 грн', '39 560,32 грн', '2,13%', '126,25', '313,35 грн'] },
];

const headers = ['Коригування ставки', 'Кліки', 'Покази', 'CTR', 'Сер. ціна за клік', 'Вартість', 'Коеф. конверсії', 'Конверсії', 'Вартість / конв.'];

const cellClass = (i: number) => {
  if (i === 0) return 'relative border-l border-[#dadce0] pr-[20px]';
  if (i === 8) return 'border-l border-[#dadce0] pr-[13px]';
  return 'border-l border-[#dadce0] pr-[7px]';
};

const checkboxClass = 'mx-auto block size-[13px] appearance-none rounded-[2px] border border-[#5f6368] bg-white';

const LocationsTable = () => (
  <div className="relative">
    <table className="h-[275px] w-full table-fixed border-collapse text-right text-[10px] text-[#3c4043]">
      <colgroup>
        <col className="w-[46px]" /><col className="w-[241px]" /><col className="w-[168px]" /><col className="w-[141px]" />
        <col className="w-[141px]" /><col className="w-[141px]" /><col className="w-[141px]" /><col className="w-[147px]" />
        <col className="w-[141px]" /><col className="w-[141px]" /><col className="w-[154px]" />
      </colgroup>
      <thead>
        <tr className="h-[34px] border-y border-[#dadce0]">
          <th><input type="checkbox" aria-label="Вибрати всі" className={checkboxClass} /></th>
          <th className="text-left font-medium">Цільовий регіон</th>
          {headers.map((header, i) => (
            <th key={header} className={`font-medium ${cellClass(i)}`}>
              {i === 7 && <MdArrowDownward size={12} className="mr-[4px] inline" />}
              <span className={`${i > 5 ? 'border-b border-dashed border-[#3c4043] pb-px' : ''} ${i === 7 ? 'font-bold' : ''}`}>{header}</span>
            </th>
          ))}
        </tr>
      </thead>
      <tbody>
        {rows.map((row) => (
          <tr key={row.name} className={`h-[34px] border-b border-[#dadce0] ${row.hover ? 'bg-[#f6f8f7]' : ''}`}>
            <td><input type="checkbox" aria-label={row.name} className={checkboxClass} /></td>
            <td className="whitespace-nowrap text-left">{row.link ? <a href="#" className="text-[#1a73e8]">{row.name}</a> : row.name}</td>
            {row.cells.map((cell, i) => (
              <td key={i} className={cellClass(i)}>
                {cell}
                {row.hover && i === 0 && <MdEdit size={15} className="absolute right-[3px] top-[9px] text-[#757575]" />}
              </td>
            ))}
          </tr>
        ))}
        {totals.map((row) => (
          <tr key={row.name} className="h-[34px] border-b border-[#dadce0] bg-[#f8f9fb] text-[#5f6368]">
            <td />
            <td className="text-left">
              <span className="flex items-center gap-[7px]">
                {row.expandable && <MdKeyboardArrowDown size={20} />}
                {row.name}
                <MdHelpOutline size={13} />
              </span>
            </td>
            {row.cells.map((cell, i) => <td key={i} className={cellClass(i)}>{cell}</td>)}
          </tr>
        ))}
      </tbody>
    </table>
    <div className="pointer-events-none absolute left-[10px] right-0 top-[64px] h-[48px] border-[3px] border-[#d90000]" />
    <svg viewBox="0 0 13 20" className="absolute left-[828px] top-[88px] h-5 w-[13px]" aria-hidden="true">
      <path d="M1 1V16L4.500 13L7 19L9.500 18L7 12.500H12Z" fill="#fff" stroke="#222" />
    </svg>
    <div className="pointer-events-none absolute right-[80px] top-[251px] w-[419px] font-['Open_Sans',sans-serif] text-[#8c8c8c]/70">
      <div className="text-2xl">Активация Windows</div>
      <div className="whitespace-nowrap text-[17px] leading-[25px]">Чтобы активировать Windows, перейдите в раздел<br />"Параметры".</div>
    </div>
  </div>
);

const LocationsCard = () => (
  <section className="relative mr-px bg-white shadow">
    <div className="flex h-[35px] items-center rounded-b-[6px] bg-[#e8f0fe] pl-[22px] text-xs text-[#3c4043]">
      <MdOutlineInfo size={19} className="mb-[4px] text-[#1967d2]" />
      <span className="ml-[12px]">
        Виділені області – це місцеположення, які можна включити до цієї кампанії або виключити з неї. Ці області не відображають регіональні кордони.{' '}
        <a href="#" className="text-[#1967d2] underline">Докладніше</a>
      </span>
    </div>
    <button aria-label="Змінити місцеположення" className="absolute left-[3px] top-[18px] flex size-[33px] items-center justify-center rounded-full bg-[#1a73e8] text-white shadow-md">
      <MdOutlineModeEdit size={19} />
    </button>
    <TableToolbar />
    <LocationsTable />
    <div className="flex h-[40px] items-center justify-end pr-[20px] text-[11px] text-[#3c4043]">1–5 із 5</div>
  </section>
);

/* ---------- Taskbar ---------- */

const Taskbar = () => (
  <footer className="flex h-[60px] items-center bg-[linear-gradient(90deg,#1c2630_0%,#2c211c_20%,#30231b_38%,#24221f_55%,#222_62%,#262320_80%,#20252b_100%)] pl-[25px] pr-[25px] text-sm text-white">
    <button className="flex w-[533px] items-center gap-[13px] text-left">
      <svg viewBox="0 0 26 30" className="h-[30px] w-[26px]" aria-hidden="true">
        <rect x="13" y="1" width="9" height="22" rx="4.500" fill="#cfe6fb" /><circle cx="17.500" cy="22.500" r="6.500" fill="#cfe6fb" />
        <circle cx="17.500" cy="22.500" r="4" fill="#1e7fd8" /><path d="M17.500 8V20" stroke="#1e7fd8" strokeWidth="2.500" />
        <path d="M0 6H10V14L8 9L7 13L5 9L4 15L2.500 9Z" fill="#8ec5f4" />
      </svg>
      <span className="leading-5">Cold weather<br /><span className="text-[#cfcfcf]">Now</span></span>
    </button>
    <button aria-label="Пуск">
      <svg viewBox="0 0 29 29" className="size-[29px]" fill="#3cb8fb" aria-hidden="true"><path d="M0 0H14V14H0ZM15 0H29V14H15ZM0 15H14V29H0ZM15 15H29V29H15Z" /></svg>
    </button>
    <label className="ml-[16px] flex h-10 w-[275px] items-center rounded-full border border-[#555250] bg-[#413e3c] pl-[13px]">
      <MdSearch size={23} />
      <input aria-label="Поиск" placeholder="Поиск" className="ml-[10px] w-full min-w-0 bg-transparent text-base outline-none placeholder:text-[#d0d0d0]" />
    </label>
    <div className="ml-[3px] flex">
      <button aria-label="Подання завдань" className="flex h-[50px] w-[55px] items-center justify-center">
        <svg viewBox="0 0 30 28" className="h-[28px] w-[30px]" aria-hidden="true"><rect x="7" width="23" height="21" rx="2" fill="#eee" /><rect y="8" width="23" height="20" rx="2" fill="#777" fillOpacity="0.85" /></svg>
      </button>
      <button aria-label="Copilot" className="flex h-[50px] w-[55px] items-center justify-center">
        <svg viewBox="0 0 28 28" className="size-7" aria-hidden="true">
          <path d="M9 2H18L13 24Q12 26 9 26H6Q0 26 1 19L4 7Q5 2 9 2Z" fill="#2a9df4" />
          <path d="M2 14L11 12L9 20Q8 26 4 24Q0 22 2 14Z" fill="#f2c230" />
          <path d="M18 2H22Q28 3 27 10L24 21Q22 26 18 26H9L15 8Q16 2 18 2Z" fill="#c85ff0" />
          <path d="M13 15L26 13L24 21Q22 26 18 26H10Z" fill="#ff7a59" />
          <path d="M12 2H19L17 8Q15 4 12 2Z" fill="#1755c9" />
        </svg>
      </button>
      <button aria-label="Python" className="flex h-[50px] w-[55px] items-center justify-center">
        <svg viewBox="0 0 28 28" className="size-7" aria-hidden="true">
          <path d="M1 0H16L22 6V28H1Z" fill="#eee" /><path d="M4 5H14M4 9H18M4 13H14M4 17H12M4 21H12" stroke="#999" />
          <path d="M14 14Q18 10 22 13V19H16V23H13Q12 18 14 14Z" fill="#3b77a8" /><path d="M23 15H26Q29 20 26 25Q22 28 18 26V21H23Z" fill="#fdd13a" />
        </svg>
      </button>
      <button aria-label="Chrome" className="relative mx-[3px] flex h-[50px] w-[50px] items-center justify-center rounded-md bg-[#353433]">
        <svg viewBox="0 0 30 30" className="size-[30px]" aria-hidden="true">
          <circle cx="15" cy="15" r="14" fill="#ea4335" />
          <path d="M2.900 8L11 22L15 29A14 14 0 0 1 2.900 8Z" fill="#34a853" />
          <path d="M15 29A14 14 0 0 0 27.100 8H15L21 18.500Z" fill="#fbbc04" />
          <circle cx="15" cy="15" r="6.500" fill="#4285f4" stroke="#fff" strokeWidth="1.500" />
        </svg>
        <span className="absolute right-[4px] top-[4px] flex size-[19px] items-center justify-center rounded-full bg-[#7e57c2] text-[11px]">Д</span>
        <span className="absolute bottom-0 h-[4px] w-5 rounded-full bg-[#f58a6c]" />
      </button>
      <button aria-label="Провідник" className="flex h-[50px] w-[55px] items-center justify-center">
        <svg viewBox="0 0 30 28" className="h-7 w-[30px]" aria-hidden="true">
          <path d="M0 3Q0 1 2 1H11L14 5H28Q30 5 30 7V24H0Z" fill="#e5a50f" /><rect y="6" width="30" height="20" rx="2" fill="#ffd35c" /><rect x="5" y="19" width="20" height="8" rx="2" fill="#1c86d8" />
        </svg>
      </button>
      <button aria-label="Telegram" className="flex h-[50px] w-[55px] items-center justify-center">
        <span className="flex size-[27px] items-center justify-center rounded-full bg-[#2aa3df]"><FaTelegramPlane size={16} /></span>
      </button>
      <button aria-label="Discord" className="relative mx-[2px] flex h-[50px] w-[50px] items-center justify-center rounded-md bg-[#81464a]">
        <span className="flex size-[30px] items-center justify-center rounded-full bg-[#5865f2]"><FaDiscord size={19} /></span>
        <span className="absolute right-[5px] top-[5px] flex size-[17px] items-center justify-center rounded-full bg-[#ed4245]"><span className="size-[7px] rounded-full bg-white" /></span>
        <span className="absolute bottom-0 h-[4px] w-10 rounded-full bg-[#ff9aa2]" />
      </button>
      <button aria-label="Viber" className="relative flex h-[50px] w-[55px] items-center justify-center">
        <FaViber size={29} className="text-[#8f6bf5]" />
        <span className="absolute right-[7px] top-[4px] flex h-[19px] w-[19px] items-center justify-center rounded-full bg-[#ff3b30] text-[11px]">171</span>
        <span className="absolute bottom-0 h-[4px] w-[7px] rounded-full bg-[#999]" />
      </button>
      <button aria-label="Google Ads" className="relative flex h-[50px] w-[55px] items-center justify-center">
        <AdsLogo className="h-[26px] w-[28px]" />
        <span className="absolute bottom-0 h-[4px] w-[7px] rounded-full bg-[#999]" />
      </button>
    </div>
    <div className="ml-auto flex items-center">
      <MdKeyboardArrowUp size={24} />
      <svg viewBox="0 0 22 20" className="ml-[18px] h-5 w-[22px]" aria-hidden="true"><path d="M5 16Q0 15 1 11Q2 8 5 8Q7 3 12 4Q16 5 16 8Q21 8 21 12Q21 16 17 16Z" fill="#888" /><path d="M2 1L20 19" stroke="#eee" strokeWidth="1.500" /></svg>
      <svg viewBox="0 0 20 20" className="ml-[18px] size-5" fill="none" stroke="#f58a6c" strokeWidth="1.500" aria-hidden="true"><path d="M18 2L2 10L10 12L13 19Z" /></svg>
      <span className="ml-[25px]">УКР</span>
      <svg viewBox="0 0 20 18" className="ml-[24px] h-[18px] w-5" fill="none" stroke="#fff" strokeWidth="1.500" aria-hidden="true"><path d="M1 6.500Q10 -1.500 19 6.500M4 10Q10 4.500 16 10M7 13Q10 10.500 13 13" /><circle cx="10" cy="15.500" r="1" fill="#fff" /></svg>
      <svg viewBox="0 0 20 18" className="ml-[10px] h-[18px] w-5" fill="none" stroke="#fff" strokeWidth="1.500" aria-hidden="true"><path d="M1 6.500H4L9 2V16L4 11.500H1ZM12 6Q14 9 12 12M14.500 4Q18 9 14.500 14M17 2Q21 9 17 16" /></svg>
      <svg viewBox="0 0 21 16" className="ml-[10px] h-4 w-[21px]" fill="none" stroke="#fff" strokeWidth="1.500" aria-hidden="true"><rect x="1" y="2" width="16" height="12" rx="3" /><rect x="3.500" y="4.500" width="7" height="7" fill="#fff" /><path d="M19 6V10" /></svg>
      <div className="ml-[20px] text-right leading-5">17:53<br />09.02.2026</div>
    </div>
  </footer>
);

const App: React.FC = () => (
  <div className="flex min-h-screen flex-col bg-white font-['Open_Sans',sans-serif]">
    <div className="border-l border-[#777]">
      <TabStrip />
      <Toolbar />
      <Bookmarks />
    </div>
    <main className="flex flex-1 flex-col border-b border-l border-[#777] bg-[#f1f3f4] font-[Roboto,sans-serif]">
      <AdsHeader />
      <div className="flex flex-1">
        <Rail />
        <SideNav />
        <div className="min-w-0 flex-1">
          <ScopeBar />
          <StatusRow />
          <PageTitle />
          <LocationMap />
          <LocationsCard />
          <div className="pl-[6px] pt-[17px] text-[10px] leading-[13px] text-[#3c4043]">
            <a href="#" className="text-[#1967d2] underline">Звіти створюються не в реальному часі.</a> Часовий пояс для дат і часу: (GMT+02:00) за східноєвропейським часом.{' '}
            <a href="#" className="text-[#1967d2] underline">Докладніше</a>
            <p>Деякі рекламні ресурси можуть надаватися сторонніми посередниками.</p>
            <p>Під час наведення курсора на заголовок стовпця для акредитованих показників відображатиметься позначка про акредитацію організацією Media Rating Council (MRC).</p>
          </div>
        </div>
      </div>
    </main>
    <Taskbar />
  </div>
);

export default App;
